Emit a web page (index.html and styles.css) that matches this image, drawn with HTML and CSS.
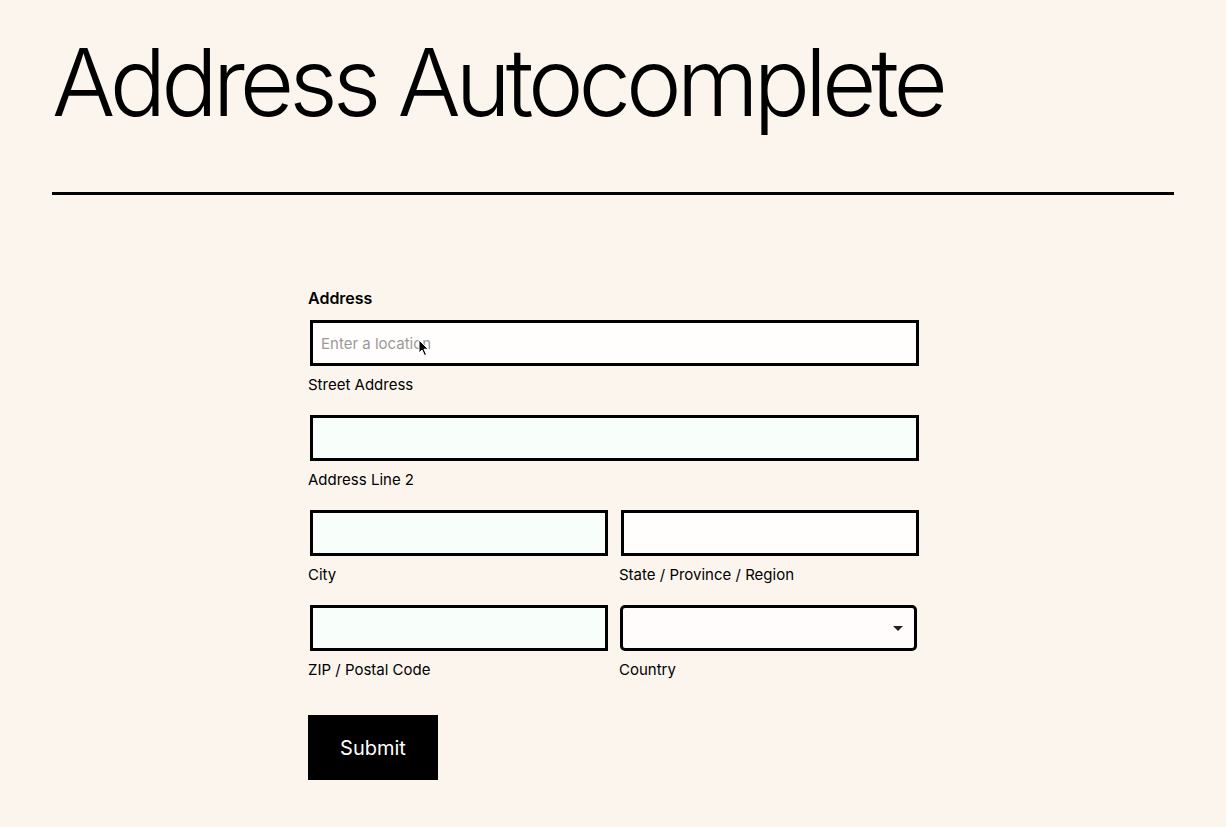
FILE: index.html
```html
<!DOCTYPE html>
<html lang="en">
<head>
<meta charset="utf-8">
<title>Address Autocomplete</title>
<link rel="stylesheet" href="styles.css">
</head>
<body>
<main class="page">
  <header class="page-header">
    <h1 class="title">Address Autocomplete</h1>
    <hr class="rule">
  </header>
  <form class="form">
    <div class="field">
      <label class="field-label" for="autocomplete">Address</label>
      <div class="input-wrap">
        <input id="autocomplete" class="input input-white" type="text" placeholder="Enter a location">
        <svg class="cursor" width="12" height="18" viewBox="0 0 12 18" aria-hidden="true">
          <path d="M1 1 L1 14 L4 11 L6.5 16.5 L8.5 15.6 L6 10.2 L10.2 10.2 Z" fill="#000" stroke="#fff" stroke-width="1"/>
        </svg>
      </div>
      <span class="sub-label">Street Address</span>
    </div>
    <div class="field">
      <input class="input input-mint" type="text">
      <span class="sub-label">Address Line 2</span>
    </div>
    <div class="row">
      <div class="field">
        <input class="input input-mint" type="text">
        <span class="sub-label">City</span>
      </div>
      <div class="field">
        <input class="input input-white" type="text">
        <span class="sub-label">State / Province / Region</span>
      </div>
    </div>
    <div class="row">
      <div class="field">
        <input class="input input-mint" type="text">
        <span class="sub-label">ZIP / Postal Code</span>
      </div>
      <div class="field">
        <div class="select">
          <span class="select-arrow"></span>
        </div>
        <span class="sub-label">Country</span>
      </div>
    </div>
    <div class="actions">
      <button type="button" class="submit">Submit</button>
    </div>
  </form>
</main>
</body>
</html>
```

FILE: styles.css
```css
* { box-sizing: border-box; }

html, body {
  margin: 0;
  padding: 0;
  background: #fbf5ee;
}

body {
  font-family: "Inter", "Liberation Sans", sans-serif;
  color: #000;
}

.page {
  padding: 0 52px;
}

.page-header {
  padding-top: 27px;
}

.title {
  margin: 0;
  font-family: "Inter", "Liberation Sans", sans-serif;
  font-weight: 350;
  font-size: 94px;
  line-height: 110px;
  letter-spacing: -5.1px;
  color: #000;
}

.rule {
  margin: 55px 0 0;
  border: 0;
  height: 3px;
  background: #000;
}

.form {
  width: 613px;
  margin: 93px 0 0 calc(50% - 305px);
  display: flex;
  flex-direction: column;
  gap: 18px;
}

.field {
  display: flex;
  flex-direction: column;
  min-width: 0;
}

.field-label {
  font-size: 16px;
  font-weight: 600;
  line-height: 20px;
  margin-bottom: 10px;
}

.input-wrap {
  position: relative;
}

.input {
  display: block;
  width: calc(100% - 4px);
  height: 46px;
  margin: 2px;
  border: 3px solid #000;
  border-radius: 0;
  padding: 0 8px;
  font-family: "Inter", "Liberation Sans", sans-serif;
  font-size: 15px;
  color: #000;
  outline: none;
}

.input::placeholder {
  color: #9a9a9a;
}

.input-white { background: #fffefd; }
.input-mint { background: #f8fef9; }

.cursor {
  position: absolute;
  left: 110px;
  top: 21px;
}

.sub-label {
  font-size: 15px;
  font-weight: 400;
  line-height: 20px;
  margin-top: 7px;
}

.row {
  display: grid;
  grid-template-columns: 1fr 1fr;
  column-gap: 9px;
}

.select {
  position: relative;
  height: 46px;
  margin: 2px 4px 2px 1px;
  border: 3px solid #000;
  border-radius: 5px;
  background: #fffcfb;
}

.select-arrow {
  position: absolute;
  right: 11px;
  top: 18px;
  width: 0;
  height: 0;
  border-left: 5px solid transparent;
  border-right: 5px solid transparent;
  border-top: 5px solid #222;
}

.actions {
  padding-top: 17px;
}

.submit {
  width: 130px;
  height: 65px;
  border: 0;
  border-radius: 0;
  background: #000;
  color: #fff;
  font-family: "Inter", "Liberation Sans", sans-serif;
  font-size: 20px;
  cursor: pointer;
}
```
